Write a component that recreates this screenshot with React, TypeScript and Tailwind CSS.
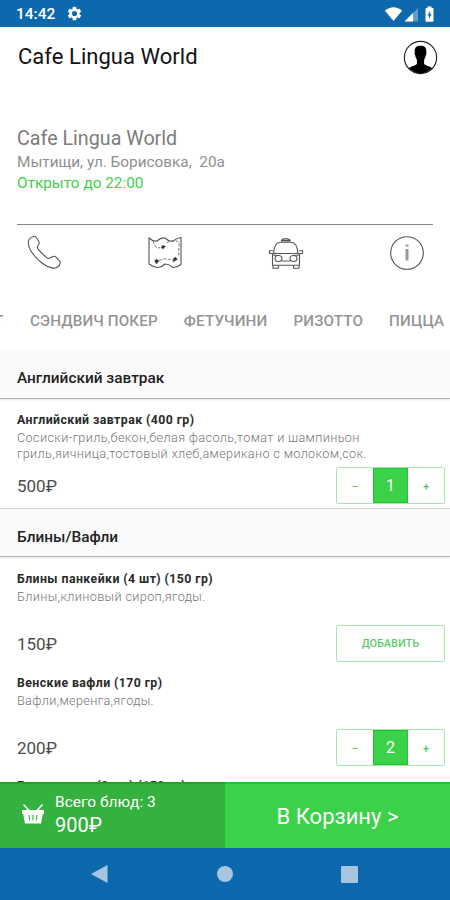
import { useState } from "react";
import { clsx } from "clsx";

interface Dish {
  id: string;
  title: string;
  description: string[];
  price: number;
  className: string;
  count: number;
}

interface MenuSection {
  title: string;
  headerClass: string;
  dishes: Dish[];
}

const MENU: MenuSection[] = [
  {
    title: "Английский завтрак",
    headerClass: "h-[49px] pt-[18px]",
    dishes: [
      {
        id: "english",
        title: "Английский завтрак (400 гр)",
        description: [
          "Сосиски-гриль,бекон,белая фасоль,томат и шампиньон",
          "гриль,яичница,тостовый хлеб,американо с молоком,сок.",
        ],
        price: 500,
        className: "h-[110px] pt-[13px] pb-[4px]",
        count: 1,
      },
    ],
  },
  {
    title: "Блины/Вафли",
    headerClass: "h-[48px] pt-[18px]",
    dishes: [
      {
        id: "pancakes",
        title: "Блины панкейки (4 шт) (150 гр)",
        description: ["Блины,клиновый сироп,ягоды."],
        price: 150,
        className: "h-[110px] pt-[14px] pb-[5px]",
        count: 0,
      },
      {
        id: "vienna",
        title: "Венские вафли (170 гр)",
        description: ["Вафли,меренга,ягоды."],
        price: 200,
        className: "h-[104px] pt-[8px] pb-[5px]",
        count: 2,
      },
      {
        id: "meat",
        title: "Блины мясо (2 шт) (150 гр)",
        description: [],
        price: 150,
        className: "h-[104px] pt-[7px] pb-[5px]",
        count: 0,
      },
    ],
  },
];

const TABS = ["СЭНДВИЧ ПОКЕР", "ФЕТУЧИНИ", "РИЗОТТО", "ПИЦЦА"];

function StatusBar() {
  return (
    <div className="flex h-[27px] shrink-0 items-center bg-[#0d69ad] pl-4 pr-[14px] text-white">
      <span className="pt-[2px] text-[15.500px] font-medium leading-none">14:42</span>
      <svg viewBox="0 0 24 24" className="ml-[11px] size-[17px]" fill="currentColor">
        <path d="M19.14 12.94c.04-.3.06-.61.06-.94 0-.32-.02-.64-.07-.94l2.03-1.58a.49.49 0 0 0 .12-.61l-1.92-3.32a.49.49 0 0 0-.59-.22l-2.39.96c-.5-.38-1.03-.7-1.62-.94l-.36-2.54a.48.48 0 0 0-.48-.41h-3.84c-.24 0-.43.17-.47.41l-.36 2.54c-.59.24-1.13.57-1.62.94l-2.39-.96c-.22-.08-.47 0-.59.22L2.74 8.87c-.12.21-.08.47.12.61l2.03 1.58c-.05.3-.09.63-.09.94s.02.64.07.94l-2.03 1.58a.49.49 0 0 0-.12.61l1.92 3.32c.12.22.37.29.59.22l2.39-.96c.5.38 1.03.7 1.62.94l.36 2.54c.05.24.24.41.48.41h3.84c.24 0 .44-.17.47-.41l.36-2.54c.59-.24 1.13-.56 1.62-.94l2.39.96c.22.08.47 0 .59-.22l1.92-3.32a.49.49 0 0 0-.12-.61l-2.01-1.58zM12 15.600A3.600 3.600 0 1 1 12 8.400a3.600 3.600 0 0 1 0 7.200z" />
      </svg>
      <svg viewBox="0 0 52 18" className="ml-auto h-[18px] w-[52px]">
        <path d="M1 5.800C5.800 1 13.200 1 18 5.800L9.500 16z" fill="#fff" />
        <path d="M34 3v13.500H20.500z" fill="#fff" fillOpacity=".35" />
        <path d="M29 8v8.500H20.500z" fill="#fff" />
        <path d="M43.500 3V1.600h4V3h1.200q.8 0 .8.8v12q0 .9-.8.900h-6.400q-.8 0-.8-.900v-12q0-.8.8-.8z" fill="#fff" />
        <path d="M46.300 5.800 43.500 10.600h1.500V14l2.600-4.700h-1.400z" fill="#0d69ad" />
      </svg>
    </div>
  );
}

function AppHeader() {
  return (
    <header className="flex h-[60px] shrink-0 items-center justify-between pl-[18px] pr-3">
      <h1 className="text-[22px] leading-none tracking-[0.04px] text-[#111]">Cafe Lingua World</h1>
      <svg viewBox="0 0 36 36" className="size-[35px]">
        <circle cx="18" cy="18" r="16.600" fill="#fff" stroke="#222" strokeWidth="1.200" />
        <path
          d="M18 6c-4.600 0-6.400 2.400-5.900 6.600-.4.400-.2 2.700.5 3.200.2 2 .9 3.300 1.700 4.400v4.300c-1 2.300-6.400 2.400-8.200 4.600a16.400 16.400 0 0 0 23.800 0c-1.800-2.200-7.200-2.300-8.200-4.600v-4.300c.8-1.100 1.500-2.400 1.700-4.400.7-.5.900-2.800.5-3.200C24.400 8.400 22.600 6 18 6z"
          fill="#000"
        />
      </svg>
    </header>
  );
}

function CafeInfo() {
  return (
    <div className="mx-[17px] h-[138px] shrink-0 border-b border-[#858585] pt-[40px]">
      <div className="text-[19.700px] leading-6 text-[#7c7c7c]">Cafe Lingua World</div>
      <div className="mt-px whitespace-pre text-[15.350px] leading-[21px] text-[#909090]">
        {"Мытищи, ул. Борисовка,  20а"}
      </div>
      <div className="text-[15.350px] leading-[21px] text-[#3fd04c]">Открыто до 22:00</div>
    </div>
  );
}

function Actions() {
  return (
    <div className="flex h-[57px] shrink-0 items-center justify-between pb-px pl-[26px] pr-[25px] text-[#555]">
      <svg viewBox="0 0 36 36" className="size-9" fill="none" stroke="currentColor" strokeWidth="1.100" strokeLinejoin="round">
        <path d="M8.300 1.300c-2.800.7-5.600 2.600-5.900 5.200-.2 2.800.4 5.600 1.800 8.200 3 5.100 7 9.700 11.700 13.300 3.200 2.400 6.600 4.200 10 4.900 1.900.3 3.600.3 4.900-.4 2-1.100 3.300-2.700 3.500-4.600.1-.9-.3-1.500-1-2.200l-3.200-3.500c-1-1-1.900-1.200-3.100-.7l-3.100 1.600c-1.200.5-2.100.3-3.100-.5-3.400-2.700-6.200-5.400-8.800-8.500-.9-1.200-.8-2.300-.1-3.400 1.100-1.500 1.800-2.200 1.200-3.600-1-1.900-2.100-3.600-3.300-5.100-.5-.6-.9-.8-1.500-.7z" />
      </svg>
      <svg viewBox="0 0 36 36" className="ml-px size-9" fill="none" stroke="currentColor" strokeWidth="1.100">
        <path d="M2 3q4 3.800 8 3 4-3.800 8-3 4 4 8 3 4-3 8-3.500V29.500q-4 3-8 3-4-3.500-8-3.500-4 4-8 3.500-4-.8-8-3.500z" />
        <path d="M6 6q2 6 4 6.800h3m7-5q4-2.500 8-2 4 .2 4 3.200.5 3-.5 6 1 4-.5 7M12 25.500q4-2 8-1.500 3 1 6 1" strokeWidth=".8" strokeDasharray="3 1.500" />
        <path d="m14 12.500 2-2.500 2.500 1.500-2.500 2.500zM9.500 29l-2-3 2-2 2.500 2zM26 27l.5-3.500 2-1.500 2 2.500z" fill="#333" strokeWidth=".4" />
      </svg>
      <svg viewBox="0 0 38 36" className="h-9 w-[38px]" fill="none" stroke="currentColor" strokeWidth="1.100">
        <path d="M14.500 6.500V5l2-1.200h4.500l2 1.200v1.500M6.500 19C7 11.500 9 7.200 13.500 7.200h10.500c4.500 0 6.500 4.300 7 11.800M6.500 18.500H2.500v-2.800H6m25.500 2.800h4v-2.800H32M5.500 18.500h27v11.800h-27z" />
        <ellipse cx="11.500" cy="23.500" rx="3.500" ry="3" />
        <ellipse cx="26.500" cy="23.500" rx="3.500" ry="3" />
        <path d="M15 26h8M6 20l5 .5m21-.5-5 .5M6 30.500v2.800h5.500v-2.800m15 0v2.800H32v-2.800" />
        <path d="M15 5.500h8" strokeWidth="1.800" />
      </svg>
      <svg viewBox="0 0 36 36" className="size-9" fill="none" stroke="currentColor" strokeWidth="1.100">
        <circle cx="18" cy="18" r="16.300" />
        <path d="M18 14v11.500" stroke="#999" strokeWidth="3" />
        <path d="M18 9.500v2" stroke="#999" strokeWidth="3" />
      </svg>
    </div>
  );
}

function CategoryTabs() {
  return (
    <nav className="relative flex h-[68px] shrink-0 items-center overflow-hidden pl-[30px] pt-[10px] text-[15.200px] font-medium text-[#949494]">
      <span className="absolute left-[-6px]">Т</span>
      <div className="flex gap-[26px] whitespace-nowrap tracking-[0.15px]">
        {TABS.map((tab) => (
          <span key={tab}>{tab}</span>
        ))}
      </div>
    </nav>
  );
}

function Counter({ count, onChange }: { count: number; onChange: (n: number) => void }) {
  if (count === 0) {
    return (
      <button
        onClick={() => onChange(1)}
        className="h-[37px] w-[109px] rounded-[2px] border border-[#a9e6ae] text-[10.500px] font-medium tracking-[0.25px] text-[#5bcd65]"
      >
        ДОБАВИТЬ
      </button>
    );
  }
  return (
    <div className="grid h-[37px] w-[109px] grid-cols-[36px_35px_36px] rounded-[2px] border border-[#a9e6ae] text-[#4cc957]">
      <button className="pt-1 text-[11px]" onClick={() => onChange(count - 1)}>
        –
      </button>
      <span className="flex items-center justify-center border border-[#1fc52d] bg-[#3bd148] text-[16px] text-white">
        {count}
      </span>
      <button className="pt-1 text-[11px] font-medium" onClick={() => onChange(count + 1)}>
        +
      </button>
    </div>
  );
}

export default function App() {
  const [counts, setCounts] = useState<Record<string, number>>(() =>
    Object.fromEntries(MENU.flatMap((s) => s.dishes.map((d) => [d.id, d.count])))
  );

  const dishes = MENU.flatMap((s) => s.dishes);
  const totalCount = dishes.reduce((sum, d) => sum + counts[d.id], 0);
  const totalPrice = dishes.reduce((sum, d) => sum + counts[d.id] * d.price, 0);

  return (
    <div className="flex h-[900px] w-[450px] flex-col overflow-hidden bg-white font-[Roboto,sans-serif]">
      <StatusBar />
      <AppHeader />
      <CafeInfo />
      <Actions />
      <CategoryTabs />

      {/* Menu list */}
      <main className="min-h-0 flex-1 overflow-hidden">
        {MENU.map((section) => (
          <section key={section.title}>
            <h2
              className={clsx(
                "border-b border-[#b4b4b4] bg-[#fafafa] pl-[17px] text-[15.400px] font-medium leading-[21px] text-[#222] shadow-[0_1px_2px_rgba(0,0,0,0.12)]",
                section.headerClass
              )}
            >
              {section.title}
            </h2>
            {section.dishes.map((dish, i) => (
              <article
                key={dish.id}
                className={clsx(
                  "flex flex-col pl-[17px] pr-[5px]",
                  dish.className,
                  i === section.dishes.length - 1 && "border-b border-[#d0d0d0]"
                )}
              >
                <h3 className="text-[12.300px] font-bold leading-4 tracking-[0.44px] text-[#2a2a2a]">{dish.title}</h3>
                <div className="mt-[2px] text-[12.700px] font-light leading-[15.500px] tracking-[0.34px] text-[#777]">
                  {dish.description.map((line) => (
                    <p key={line} className="whitespace-nowrap">
                      {line}
                    </p>
                  ))}
                </div>
                <div className="mt-auto flex items-center justify-between">
                  <span className="pt-[3px] text-[17px] text-[#4c4c4c]">{`${dish.price}₽`}</span>
                  <Counter
                    count={counts[dish.id]}
                    onChange={(n) => setCounts({ ...counts, [dish.id]: n })}
                  />
                </div>
              </article>
            ))}
          </section>
        ))}
      </main>

      {/* Cart summary */}
      <footer className="flex h-[66px] shrink-0 text-white">
        <div className="flex w-[225px] items-center border-t-2 border-[#1ea626] bg-[#34b13f] pb-[4px] pl-[21px]">
          <svg viewBox="0 0 24 22" className="h-[22px] w-6" fill="currentColor">
            <path d="M1 7h22v4h-1.200l-1.800 9.500H4L2.200 11H1z" />
            <path d="m2.500 1.500 6.500 7M21.500 1.500l-6.500 7" stroke="currentColor" strokeWidth="1.600" />
            <path d="m8 12 .6 5.500M12 12v5.500m4-5.500-.6 5.500" stroke="#34b13f" strokeWidth="1.100" />
          </svg>
          <div className="ml-[10px]">
            <div className="text-[15.500px] leading-[22px]">{`Всего блюд: ${totalCount}`}</div>
            <div className="text-[20px] leading-6">{`${totalPrice}₽`}</div>
          </div>
        </div>
        <button className="flex-1 border-t-2 border-[#1fc52d] bg-[#3bd148] text-[22px]">
          В Корзину &gt;
        </button>
      </footer>

      {/* System navigation */}
      <div className="flex h-[52px] shrink-0 items-center justify-between bg-[#0d69ad] pl-[91px] pr-[92px] text-[#a5c5e0]">
        <svg viewBox="0 0 18 18" className="size-[18px]" fill="currentColor">
          <path d="M0 9 16.500 0v18z" />
        </svg>
        <div className="size-4 rounded-full bg-[#a5c5e0]" />
        <div className="size-[17px] rounded-[1px] bg-[#a5c5e0]" />
      </div>
    </div>
  );
}
